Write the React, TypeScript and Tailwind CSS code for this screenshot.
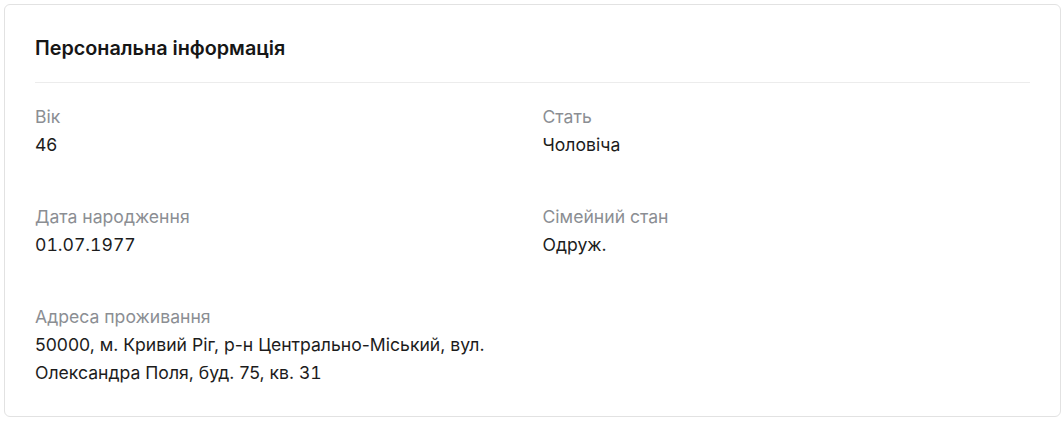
const fields = [
  { label: 'Вік', value: '46' },
  { label: 'Стать', value: 'Чоловіча' },
  { label: 'Дата народження', value: <span className="tabular-nums">01.07.1977</span> },
  { label: 'Сімейний стан', value: 'Одруж.' },
];

function Field({ label, value }: { label: string; value: React.ReactNode }) {
  return (
    <div className="text-[17.6px] leading-7">
      <div className="text-[#8b8e93]">{label}</div>
      <div className="text-[#1c1c1c]">{value}</div>
    </div>
  );
}

export default function App() {
  return (
    <div className="min-h-screen bg-white p-1 font-['Inter',sans-serif]">
      <div className="w-[1057px] h-[413px] rounded-md border border-[#e2e2e2] bg-white px-[30px]">
        <div className="pt-[29px] pb-5 border-b border-[#ececec]">
          <h2 className="text-[19.8px] leading-7 font-semibold text-[#161616]">Персональна інформація</h2>
        </div>
        <div className="pt-5 grid grid-cols-2 gap-x-5 gap-y-[44px]">
          {fields.map((f) => (
            <Field key={f.label} label={f.label} value={f.value} />
          ))}
          <div className="text-[17.6px] leading-7">
            <div className="text-[#8b8e93]">Адреса проживання</div>
            <div className="text-[#1c1c1c]">
              50000, м. Кривий Ріг, р-н Центрально-Міський, вул.
              <br />
              Олександра Поля, буд. 75, кв. <span className="tabular-nums">31</span>
            </div>
          </div>
        </div>
      </div>
    </div>
  );
}
